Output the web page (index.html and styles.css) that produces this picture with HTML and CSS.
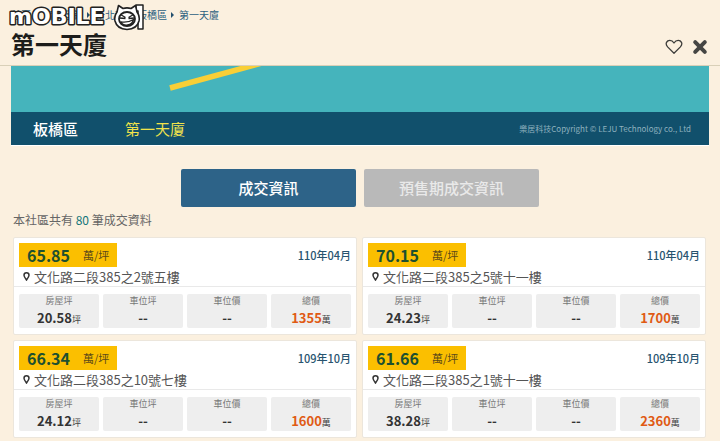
FILE: index.html
```html
<!DOCTYPE html>
<html lang="zh-Hant">
<head>
<meta charset="utf-8">
<meta name="viewport" content="width=device-width, initial-scale=1">
<title>第一天廈</title>
<link rel="stylesheet" href="styles.css">
</head>
<body>
<header class="header">
  <nav class="crumbs" aria-label="breadcrumb">
    <a href="#">首頁</a><i class="arrow"></i><a href="#">實價登錄</a><i class="arrow"></i><a href="#">新北市</a><i class="arrow"></i><a href="#">板橋區</a><i class="arrow"></i><a href="#">第一天廈</a>
  </nav>
  <div class="title-row">
    <h1 class="title">第一天廈</h1>
    <div class="actions">
      <button class="icon-btn" type="button" aria-label="收藏">
        <svg width="18" height="16" viewBox="0 0 18 16"><path d="M9 14.2 2.6 7.9C-.4 4.6 2 1.3 4.8 1.3 6.7 1.3 8.1 2.5 9 4c.9-1.5 2.3-2.7 4.2-2.7 2.8 0 5.2 3.3 2.2 6.6Z" fill="none" stroke="#3d3d3b" stroke-width="1.3" stroke-linejoin="round"/></svg>
      </button>
      <button class="icon-btn" type="button" aria-label="關閉">
        <svg width="16" height="16" viewBox="0 0 16 16"><path d="M3.2 3.2 12.8 12.8M12.8 3.2 3.2 12.8" stroke="#454543" stroke-width="4" stroke-linecap="round"/></svg>
      </button>
    </div>
  </div>
  <svg class="watermark" width="142" height="32" viewBox="0 0 142 32" role="img" aria-label="mobile01">
    <text class="wordmark" x="3" y="24">mOBILE</text>
    <g fill="#fff" stroke="#222" stroke-linejoin="round">
      <path d="M130 5h7v24h-5V11h-2Z" stroke-width="1.5"/>
      <path d="M112.500 5.500 117 8.500q4-1.300 8 0L129.500 5.500 131 12q3 4 2 9-2 8-12 8.500-10-.5-12-8.500-1-5 2-9Z" stroke-width="1.600"/>
      <ellipse cx="121" cy="19" rx="8" ry="7" stroke-width="1.800"/>
      <path d="m114.500 14.500 5 3M127.500 14.500l-5 3M113.500 18l6 .5M128.500 18l-6 .5" stroke-width="1.300"/>
      <path d="M115 22q7 1 12.500-2.500-1 5-6 5.500t-6.500-3Z" stroke-width="1.300"/>
    </g>
  </svg>
</header>

<main>
  <section class="banner">
    <div class="art">
      <svg width="100" height="45" viewBox="0 0 100 45"><path d="M1 22 93-3" stroke="#f9cf36" stroke-width="5.500"/></svg>
    </div>
    <div class="caption">
      <strong class="district">板橋區</strong>
      <span class="community">第一天廈</span>
      <small class="copyright">樂居科技Copyright © LEJU Technology co., Ltd</small>
    </div>
  </section>

  <div class="tabs">
    <button class="tab active" type="button">成交資訊</button>
    <button class="tab" type="button">預售期成交資訊</button>
  </div>

  <p class="count">本社區共有 <b>80</b> 筆成交資料</p>

  <div class="cards">
    <article class="card">
      <div class="top"><p class="price"><b>65.85</b><span>萬/坪</span></p><time>110年04月</time></div>
      <p class="address"><svg class="pin" width="7" height="9" viewBox="0 0 7 9"><path d="M3.500 8Q1 4.800 1 3.300a2.500 2.500 0 0 1 5 0Q6 4.800 3.500 8Z"/></svg>文化路二段385之2號五樓</p>
      <dl class="facts">
        <div><dt>房屋坪</dt><dd><b>20.58</b>坪</dd></div>
        <div><dt>車位坪</dt><dd><b>--</b></dd></div>
        <div><dt>車位價</dt><dd><b>--</b></dd></div>
        <div><dt>總價</dt><dd><b class="total">1355</b>萬</dd></div>
      </dl>
    </article>
    <article class="card">
      <div class="top"><p class="price"><b>70.15</b><span>萬/坪</span></p><time>110年04月</time></div>
      <p class="address"><svg class="pin" width="7" height="9" viewBox="0 0 7 9"><path d="M3.500 8Q1 4.800 1 3.300a2.500 2.500 0 0 1 5 0Q6 4.800 3.500 8Z"/></svg>文化路二段385之5號十一樓</p>
      <dl class="facts">
        <div><dt>房屋坪</dt><dd><b>24.23</b>坪</dd></div>
        <div><dt>車位坪</dt><dd><b>--</b></dd></div>
        <div><dt>車位價</dt><dd><b>--</b></dd></div>
        <div><dt>總價</dt><dd><b class="total">1700</b>萬</dd></div>
      </dl>
    </article>
    <article class="card">
      <div class="top"><p class="price"><b>66.34</b><span>萬/坪</span></p><time>109年10月</time></div>
      <p class="address"><svg class="pin" width="7" height="9" viewBox="0 0 7 9"><path d="M3.500 8Q1 4.800 1 3.300a2.500 2.500 0 0 1 5 0Q6 4.800 3.500 8Z"/></svg>文化路二段385之10號七樓</p>
      <dl class="facts">
        <div><dt>房屋坪</dt><dd><b>24.12</b>坪</dd></div>
        <div><dt>車位坪</dt><dd><b>--</b></dd></div>
        <div><dt>車位價</dt><dd><b>--</b></dd></div>
        <div><dt>總價</dt><dd><b class="total">1600</b>萬</dd></div>
      </dl>
    </article>
    <article class="card">
      <div class="top"><p class="price"><b>61.66</b><span>萬/坪</span></p><time>109年10月</time></div>
      <p class="address"><svg class="pin" width="7" height="9" viewBox="0 0 7 9"><path d="M3.500 8Q1 4.800 1 3.300a2.500 2.500 0 0 1 5 0Q6 4.800 3.500 8Z"/></svg>文化路二段385之1號十一樓</p>
      <dl class="facts">
        <div><dt>房屋坪</dt><dd><b>38.28</b>坪</dd></div>
        <div><dt>車位坪</dt><dd><b>--</b></dd></div>
        <div><dt>車位價</dt><dd><b>--</b></dd></div>
        <div><dt>總價</dt><dd><b class="total">2360</b>萬</dd></div>
      </dl>
    </article>
  </div>
</main>
</body>
</html>
```
FILE: styles.css
```css
* { box-sizing: border-box; }
body, h1, p, dl, dd { margin: 0; }
body {
  background: #fbf0df;
  color: #444;
  font-family: "Noto Sans CJK TC", "Noto Sans", sans-serif;
}
b, strong { font-weight: 700; }
button { border: 0; padding: 0; font: inherit; cursor: pointer; }
svg { display: block; }

.header {
  position: relative;
  padding: 7px 12px 0 11px;
  border-bottom: 1px solid #d9d0b8;
}
.crumbs { display: flex; align-items: center; font-size: 10px; line-height: 16px; }
.crumbs a { color: #2c5f80; text-decoration: none; }
.arrow {
  width: 3px;
  margin: 0 5px 0 4px;
  border: 3px solid transparent;
  border-left: 3px solid #24506e;
  border-right: 0;
}
.title-row { display: flex; justify-content: space-between; align-items: center; height: 42px; }
.title { font-size: 24px; line-height: 34px; font-weight: 700; color: #1d1d1b; }
.actions { display: flex; align-items: center; gap: 9px; padding-top: 6px; }
.icon-btn { background: none; }
.watermark { position: absolute; left: 6px; top: 0; }
.wordmark {
  font: bold 22px "DejaVu Sans", sans-serif;
  fill: #fff;
  stroke: #222;
  stroke-width: 3px;
  paint-order: stroke;
  stroke-linejoin: round;
}

.banner { margin: 0 11px; border-bottom: 1px solid #fff; }
.art { height: 46px; background: #45b4bc; padding-left: 158px; overflow: hidden; }
.caption {
  display: flex;
  align-items: center;
  height: 33px;
  padding: 0 18px 0 22px;
  background: #11506c;
  font-size: 15px;
}
.district { width: 92px; color: #fff; font-weight: 500; }
.community { color: #f0e34b; }
.copyright { margin-left: auto; font-size: 8px; color: #8fb0bf; }

.tabs { display: flex; justify-content: center; gap: 8px; padding-top: 23px; }
.tab {
  flex: 0 1 175px;
  height: 38px;
  padding-bottom: 2px;
  border-radius: 2px;
  background: #b9b9b9;
  color: #e9e9e9;
  font-size: 15px;
  font-weight: 500;
}
.tab.active { background: #2d6388; color: #fff; }

.count { padding: 3px 13px 6px; font-size: 12px; line-height: 20px; color: #666; }
.count b { color: #12757a; font-weight: 400; }

.cards { display: grid; grid-template-columns: 1fr 1fr; gap: 5px; padding: 1px 14px 3px 13px; }
.card { background: #fff; border: 1px solid #ece6dc; border-radius: 2px; }
.top { display: flex; align-items: center; justify-content: space-between; padding: 5px 5px 0; }
.price {
  display: flex;
  align-items: center;
  gap: 13px;
  height: 24px;
  padding: 0 8px;
  background: #fbbf00;
}
.price b { font-size: 16px; color: #1d5030; }
.price span { font-size: 11px; color: #5b4a1a; }
time { font-size: 11px; font-weight: 500; color: #28546f; }
.address {
  display: flex;
  align-items: center;
  gap: 4px;
  height: 20px;
  padding-left: 9px;
  border-bottom: 1px solid #e9e9e9;
  font-size: 13px;
  color: #555;
}
.pin path { fill: none; stroke: #333; stroke-width: 1.5px; }
.facts { display: grid; grid-template-columns: repeat(4, 1fr); gap: 4px; padding: 7px 5px 6px; }
.facts div { height: 34px; border-radius: 2px; background: #eee; text-align: center; }
dt { font-size: 9px; line-height: 14px; color: #777; }
dd { font-size: 9px; line-height: 20px; }
dd b { font-size: 13px; color: #333; }
dd .total { color: #e05a14; }
```
